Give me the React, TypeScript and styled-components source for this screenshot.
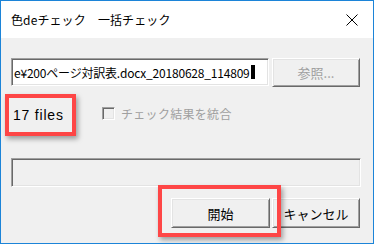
import { FC } from "react";
import styled, { createGlobalStyle, css } from "styled-components";

const GlobalStyle = createGlobalStyle`
  html, body {
    margin: 0;
    padding: 0;
    background: #ffffff;
  }
  body {
    font-family: "Noto Sans CJK JP", "Liberation Sans", sans-serif;
  }
`;

const sunken = css`
  box-sizing: border-box;
  border: 1px solid;
  border-color: #a0a0a0 #ffffff #ffffff #a0a0a0;
  box-shadow: inset 1px 1px 0 #696969, inset -1px -1px 0 #e3e3e3;
`;

const raised = css`
  box-sizing: border-box;
  border: 1px solid;
  border-color: #ffffff #696969 #696969 #ffffff;
  box-shadow: inset 1px 1px 0 #e3e3e3, inset -1px -1px 0 #a0a0a0;
  background: #f0f0f0;
`;

const App: FC = () => {
  return (
    <>
      <GlobalStyle />
      <Window>
        <TitleBar>
          <Title>色deチェック　一括チェック</Title>
          <CloseIcon width="12" height="12" viewBox="0 0 12 12">
            <path d="M0.5 0.5 L11.5 11.5 M11.5 0.5 L0.5 11.5" stroke="#000" strokeWidth="1" />
          </CloseIcon>
        </TitleBar>
        <Body>
          <PathRow>
            <PathInput>
              <span>e¥200ページ対訳表.docx_20180628_114809</span>
              <Caret />
            </PathInput>
            <Button width={88} height={29} disabled>
              参照...
            </Button>
          </PathRow>
          <OptionRow>
            <CountCell>
              <Marked>
                <CountText>17 files</CountText>
                <Highlight top={-11} right={-12} bottom={-11} left={-8} />
              </Marked>
            </CountCell>
            <CheckBox />
            <CheckText>チェック結果を統合</CheckText>
          </OptionRow>
          <Progress />
          <ButtonRow>
            <Marked>
              <Button width={99} height={30}>
                開始
              </Button>
              <Highlight top={-13} right={-11} bottom={-9} left={-13} />
            </Marked>
            <Button width={88} height={30}>
              キャンセル
            </Button>
          </ButtonRow>
        </Body>
      </Window>
    </>
  );
};

const Window = styled.div`
  position: relative;
  width: 374px;
  height: 244px;
  box-sizing: border-box;
  border: 1px solid #1c84d8;
  background: #f0f0f0;
  display: flex;
  flex-direction: column;
  overflow: hidden;
`;

const TitleBar = styled.div`
  height: 37px;
  background: #ffffff;
  display: flex;
  align-items: center;
  justify-content: space-between;
  padding: 0 15px 0 10px;
`;

const Title = styled.div`
  font-size: 12px;
  color: #000;
  letter-spacing: 0.1px;
`;

const CloseIcon = styled.svg`
  display: block;
`;

const Body = styled.div`
  display: flex;
  flex-direction: column;
  padding: 20px 13px 0 10px;
`;

const PathRow = styled.div`
  display: flex;
  align-items: flex-start;
  gap: 3px;
`;

const PathInput = styled.div`
  ${sunken};
  width: 258px;
  height: 28px;
  background: #ffffff;
  display: flex;
  align-items: center;
  padding-left: 2px;
  font-size: 12px;
  color: #000;
  white-space: nowrap;
  overflow: hidden;
  letter-spacing: -0.2px;
`;

const Caret = styled.span`
  display: inline-block;
  width: 4px;
  height: 14px;
  background: #000;
  margin-left: 1px;
`;

const Button = styled.button<{ width: number; height: number }>`
  ${raised};
  width: ${(p) => p.width}px;
  height: ${(p) => p.height}px;
  padding: 0;
  font-family: "Noto Sans CJK JP", "Liberation Sans", sans-serif;
  font-size: 13px;
  color: #000;
  display: flex;
  align-items: center;
  justify-content: center;

  &:disabled {
    color: #a0a0a0;
  }
`;

const OptionRow = styled.div`
  display: flex;
  align-items: center;
  height: 20px;
  margin-top: 16px;
`;

const CountCell = styled.div`
  width: 89px;
  padding-left: 2px;
  box-sizing: border-box;
  width: 91px;
`;

const CountText = styled.span`
  display: block;
  font-family: "Liberation Sans", "Noto Sans CJK JP", sans-serif;
  font-size: 14px;
  letter-spacing: 0.8px;
  color: #000;
  line-height: 10px;
  padding: 5px 0;
`;

const Highlight = styled.div<{ top: number; right: number; bottom: number; left: number }>`
  position: absolute;
  top: ${(p) => p.top}px;
  right: ${(p) => p.right}px;
  bottom: ${(p) => p.bottom}px;
  left: ${(p) => p.left}px;
  border: 4px solid #fe4646;
  box-shadow: 2px 3px 5px rgba(0, 0, 0, 0.35);
  pointer-events: none;
`;

const Marked = styled.div`
  position: relative;
  z-index: 1;
  display: inline-block;
`;

const CheckBox = styled.div`
  ${sunken};
  width: 13px;
  height: 13px;
  background: #f0f0f0;
`;

const CheckText = styled.span`
  margin-left: 6px;
  font-size: 12px;
  color: #a0a0a0;
  letter-spacing: 0.3px;
`;

const Progress = styled.div`
  ${sunken};
  width: 350px;
  height: 29px;
  margin-top: 35px;
  background: #f0f0f0;
`;

const ButtonRow = styled.div`
  display: flex;
  justify-content: flex-end;
  gap: 2px;
  margin-top: 11px;
`;

export default App;
